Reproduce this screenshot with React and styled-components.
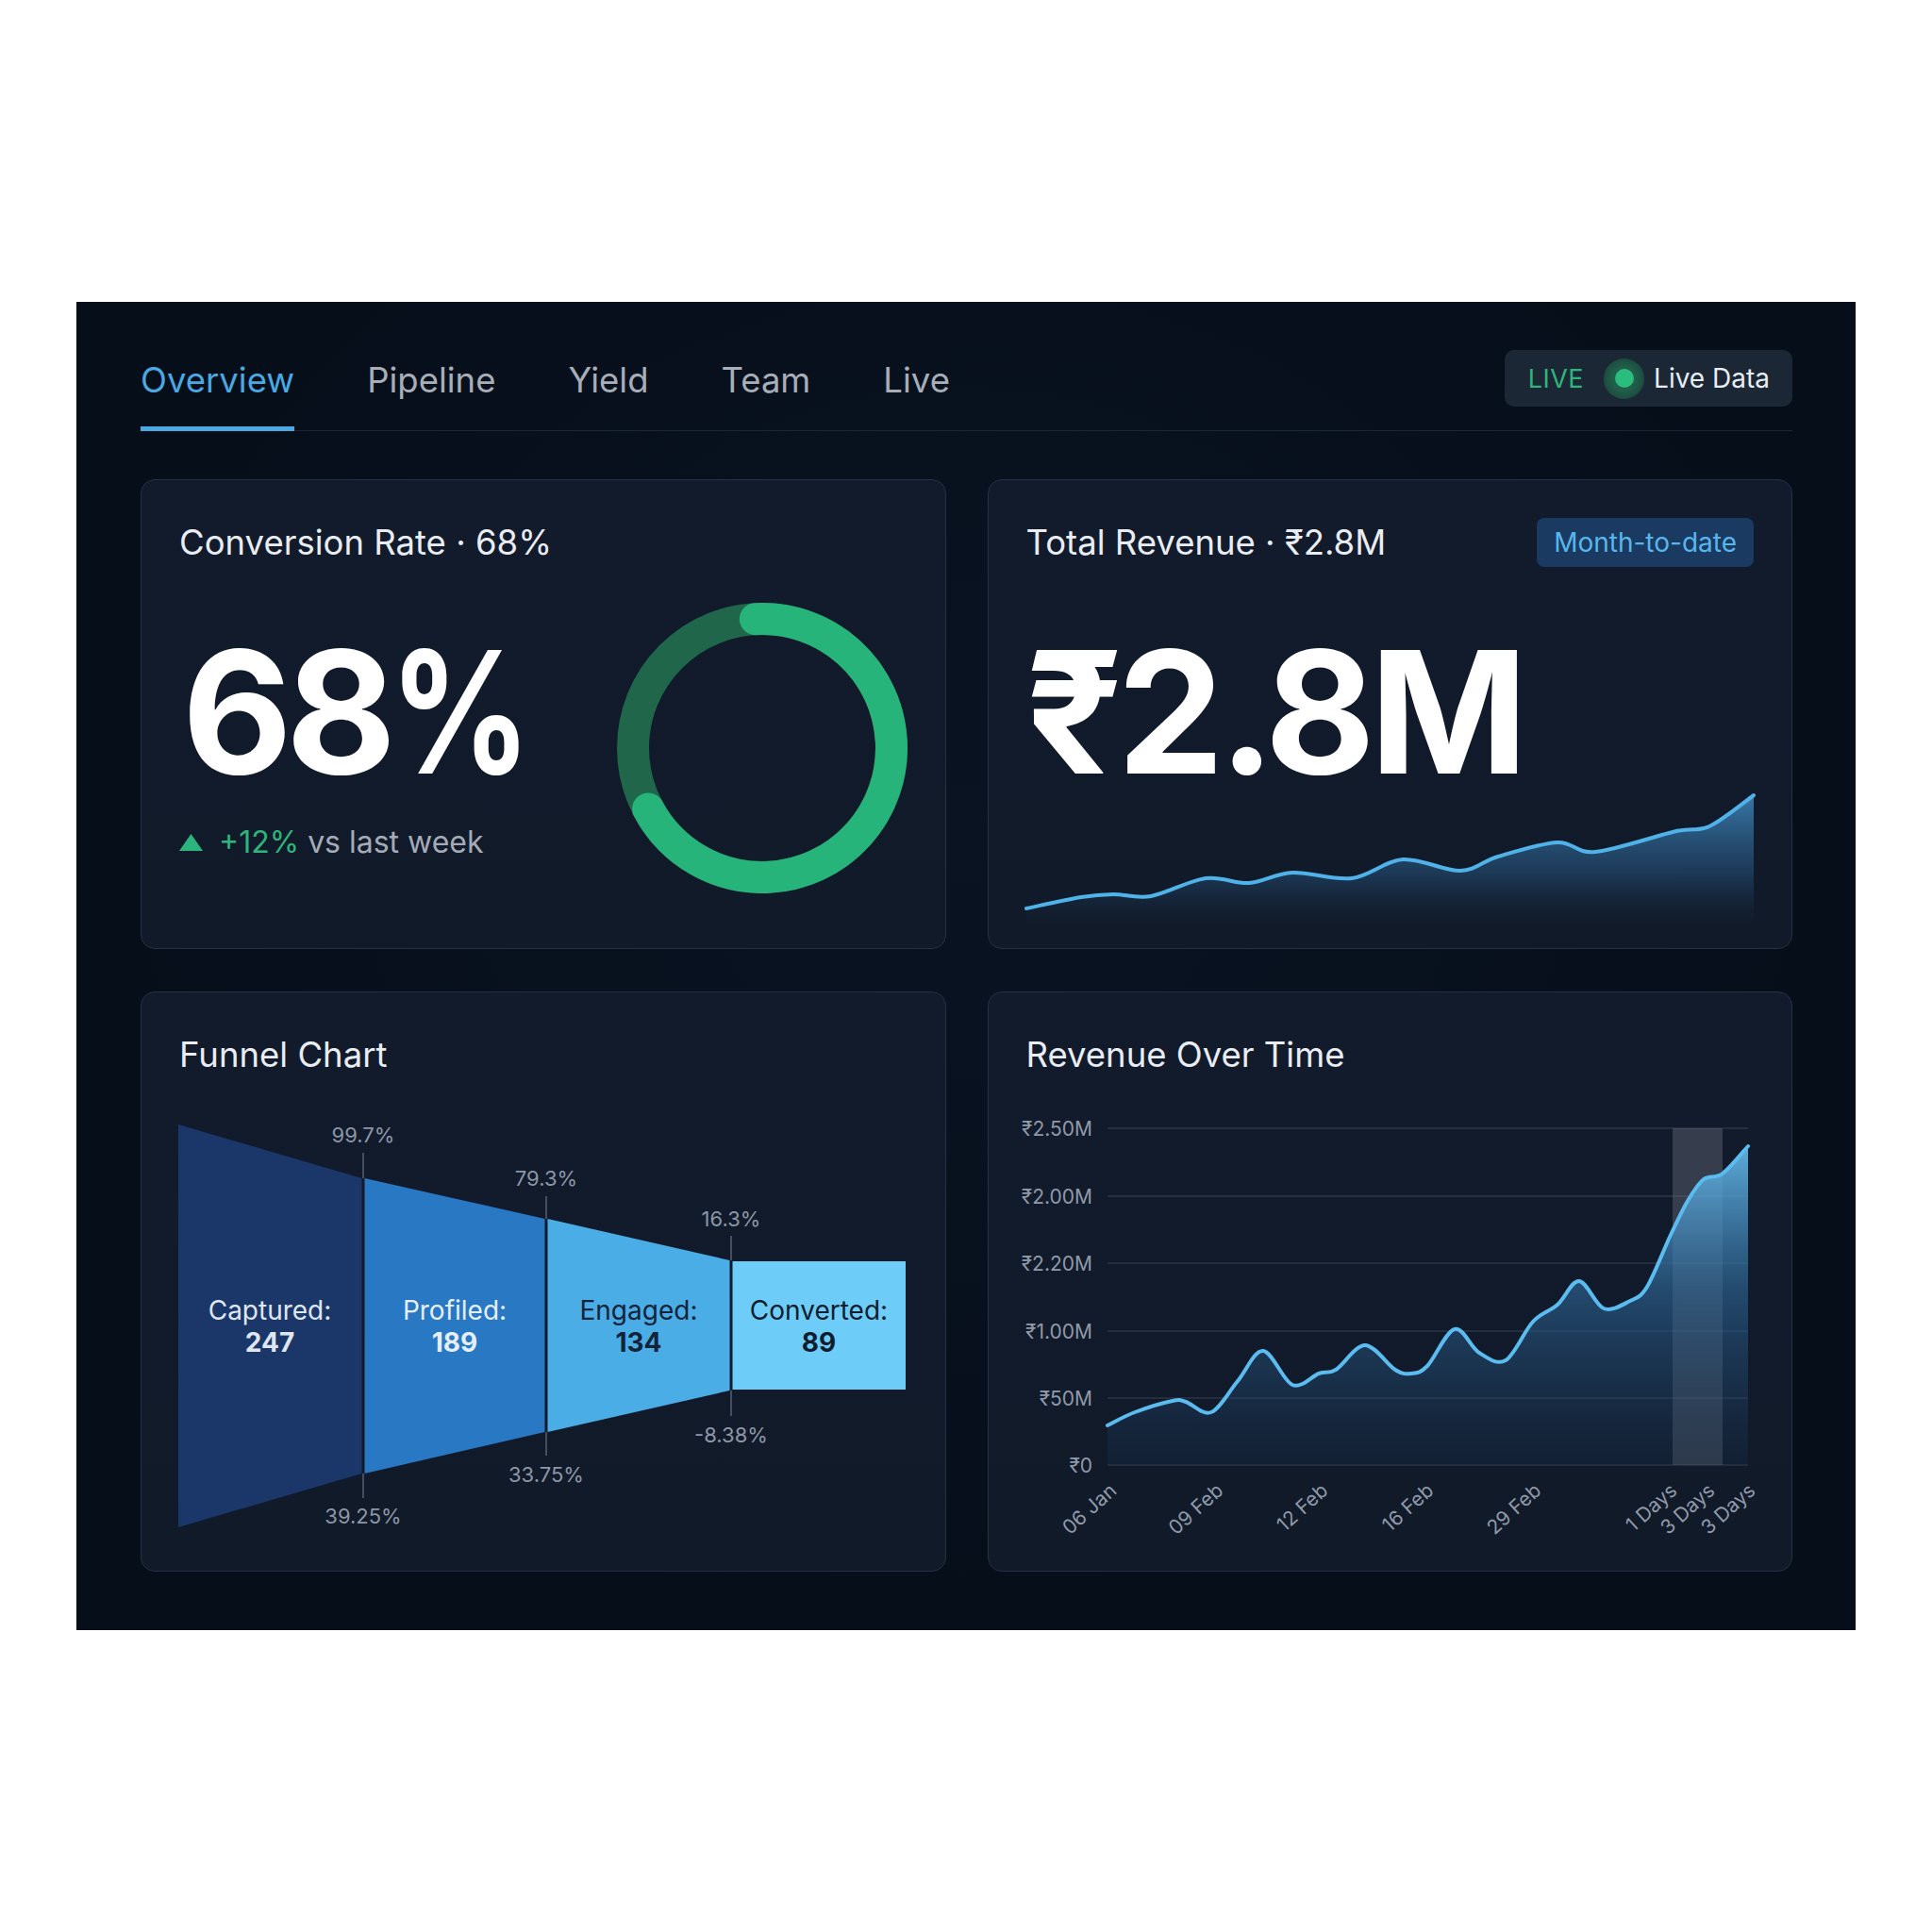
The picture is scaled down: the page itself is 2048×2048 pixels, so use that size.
import React from "react";
import styled, { createGlobalStyle } from "styled-components";

const GlobalStyle = createGlobalStyle`
  html, body {
    margin: 0;
    padding: 0;
    background: #ffffff;
  }
  body {
    font-family: "Inter", "Noto Sans", "DejaVu Sans", sans-serif;
  }
`;

const Page = styled.div`
  width: 2048px;
  height: 2048px;
  padding: 320px 0 0 81px;
  box-sizing: border-box;
`;

const Panel = styled.div`
  width: 1886px;
  height: 1408px;
  box-sizing: border-box;
  padding: 0 67px 0 68px;
  background: radial-gradient(ellipse at 50% 40%, #0a1322 0%, #060e1a 70%);
`;

const TabBar = styled.div`
  height: 137px;
  box-sizing: border-box;
  display: flex;
  align-items: flex-end;
  gap: 77px;
  border-bottom: 1px solid #1c2736;
`;

const Tab = styled.div`
  font-size: 36.5px;
  line-height: 44px;
  padding-bottom: 27px;
  margin-bottom: -1px;
  border-bottom: 5px solid ${(p) => (p.$active ? "#4aa9e2" : "transparent")};
  color: ${(p) => (p.$active ? "#4aa9e2" : "#a7aeb8")};
  cursor: pointer;
`;

const LiveBadge = styled.div`
  margin-left: auto;
  margin-bottom: 25px;
  height: 60px;
  box-sizing: border-box;
  padding: 0 24px 0 25px;
  display: flex;
  align-items: center;
  border-radius: 10px;
  background: #1c2735;
`;

const LiveText = styled.span`
  font-size: 27px;
  color: #2fb57c;
  letter-spacing: 0.5px;
`;

const LiveDot = styled.span`
  width: 43px;
  height: 43px;
  margin: 0 10px 0 21px;
  border-radius: 50%;
  background: radial-gradient(circle, #215f4b 40%, #1b4a3d 75%, rgba(28, 39, 53, 0) 100%);
  display: flex;
  align-items: center;
  justify-content: center;

  &::after {
    content: "";
    width: 20px;
    height: 20px;
    border-radius: 50%;
    background: #2bbd7e;
  }
`;

const LiveLabel = styled.span`
  font-size: 28px;
  color: #e8edf3;
`;

const Grid = styled.div`
  margin-top: 51px;
  display: grid;
  grid-template-columns: 1fr 1fr;
  grid-template-rows: 498px 615px;
  column-gap: 44px;
  row-gap: 45px;
`;

const Card = styled.div`
  box-sizing: border-box;
  border: 1px solid #253143;
  border-radius: 15px;
  background: linear-gradient(180deg, #121b2c 0%, #111a29 100%);
  padding: 40px 40px 0 40px;
  overflow: hidden;
`;

const CardHead = styled.div`
  height: 52px;
  display: flex;
  align-items: center;
  justify-content: space-between;
`;

const CardTitle = styled.div`
  font-size: 36.5px;
  line-height: 44px;
  color: #e9edf2;
`;

const RangeBadge = styled.div`
  height: 52px;
  box-sizing: border-box;
  padding: 0 18px;
  display: flex;
  align-items: center;
  border-radius: 8px;
  background: #1b3a62;
  color: #58b7ea;
  font-size: 28px;
`;

const StatBody = styled.div`
  margin-top: 38px;
  display: flex;
  justify-content: space-between;
  align-items: flex-start;
`;

const StatColumn = styled.div`
  padding-top: 41px;
  padding-left: 3px;
`;

const BigValue = styled.div`
  margin-top: ${(p) => p.$offset || 0}px;
  font-size: 180px;
  line-height: 150px;
  font-weight: 700;
  letter-spacing: ${(p) => (p.$tight ? -7 : -6)}px;
  color: #ffffff;
  white-space: nowrap;
`;

const Percent = styled.span`
  display: inline-block;
  transform: scaleX(0.82);
  transform-origin: left center;
`;

const Delta = styled.div`
  margin-top: 45px;
  margin-left: -3px;
  display: flex;
  align-items: center;
  gap: 17px;
  font-size: 32px;
  line-height: 36px;
  color: #a3abb7;
`;

const Up = styled.span`
  color: #2fb57c;
`;

const ChartSvg = styled.svg`
  display: block;
  overflow: visible;
  font-family: "Inter", "Noto Sans", "DejaVu Sans", sans-serif;
`;

// catmull-rom -> cubic bezier
const smooth = (pts) => {
  let d = `M${pts[0][0]},${pts[0][1]}`;
  for (let i = 0; i < pts.length - 1; i++) {
    const p0 = pts[i - 1] || pts[i];
    const p1 = pts[i];
    const p2 = pts[i + 1];
    const p3 = pts[i + 2] || p2;
    const c1x = p1[0] + (p2[0] - p0[0]) / 6;
    const c1y = p1[1] + (p2[1] - p0[1]) / 6;
    const c2x = p2[0] - (p3[0] - p1[0]) / 6;
    const c2y = p2[1] - (p3[1] - p1[1]) / 6;
    d += ` C${c1x.toFixed(1)},${c1y.toFixed(1)} ${c2x.toFixed(1)},${c2y.toFixed(1)} ${p2[0]},${p2[1]}`;
  }
  return d;
};

const tabs = ["Overview", "Pipeline", "Yield", "Team", "Live"];

function Ring() {
  const r = 137;
  const c = 2 * Math.PI * r;
  return (
    <svg width="308" height="308" viewBox="0 0 308 308">
      <circle cx="154" cy="154" r={r} fill="none" stroke="#1f664b" strokeWidth="34" />
      <circle
        cx="154"
        cy="154"
        r={r}
        fill="none"
        stroke="#27b47b"
        strokeWidth="34"
        strokeLinecap="round"
        strokeDasharray={`${c * 0.68} ${c}`}
        transform="rotate(-93 154 154)"
      />
    </svg>
  );
}

const sparkPts = [
  [0, 133], [58, 121], [92, 118], [132, 120], [190, 101], [236, 106], [282, 95],
  [345, 101], [399, 81], [460, 93], [500, 78], [563, 63], [603, 73], [689, 51],
  [724, 46], [771, 13],
];

function Sparkline() {
  const line = smooth(sparkPts);
  return (
    <ChartSvg width="771" height="160" viewBox="0 0 771 160">
      <defs>
        <linearGradient id="sparkFill" x1="0" y1="0" x2="0" y2="1">
          <stop offset="0%" stopColor="#428fc8" stopOpacity="0.8" />
          <stop offset="60%" stopColor="#2a5f8e" stopOpacity="0.45" />
          <stop offset="100%" stopColor="#1a3a5c" stopOpacity="0" />
        </linearGradient>
      </defs>
      <path d={`${line} L771,150 L0,150 Z`} fill="url(#sparkFill)" />
      <path d={line} fill="none" stroke="#4fb3ea" strokeWidth="4" strokeLinecap="round" />
    </ChartSvg>
  );
}

const segs = [
  { x0: 189, x1: 383.5, t0: 1192, t1: 1249, b0: 1619, b1: 1562, fill: "#1b376a", text: "#dfe6ef", name: "Captured:", value: "247", cx: 286 },
  { x0: 386.5, x1: 577.5, t0: 1249, t1: 1292, b0: 1562, b1: 1518, fill: "#2878c3", text: "#e6eef8", name: "Profiled:", value: "189", cx: 482 },
  { x0: 580.5, x1: 773.5, t0: 1292, t1: 1336, b0: 1518, b1: 1474, fill: "#4badE5", text: "#12233a", name: "Engaged:", value: "134", cx: 677 },
  { x0: 776.5, x1: 960, t0: 1337, t1: 1337, b0: 1473, b1: 1473, fill: "#6dcdf8", text: "#0f1d2e", name: "Converted:", value: "89", cx: 868 },
];

const funnelMarks = [
  { x: 385, label: "99.7%", ly: 1211, y1: 1222, y2: 1249 },
  { x: 579, label: "79.3%", ly: 1257, y1: 1268, y2: 1292 },
  { x: 775, label: "16.3%", ly: 1300, y1: 1310, y2: 1336 },
  { x: 775, label: "-8.38%", ly: 1529, y1: 1474, y2: 1501 },
  { x: 579, label: "33.75%", ly: 1571, y1: 1518, y2: 1543 },
  { x: 385, label: "39.25%", ly: 1615, y1: 1562, y2: 1588 },
];

function Funnel() {
  return (
    <ChartSvg width="771" height="520" viewBox="190 1144 771 520">
      {segs.map((s) => (
        <g key={s.name}>
          <polygon
            points={`${s.x0},${s.t0} ${s.x1},${s.t1} ${s.x1},${s.b1} ${s.x0},${s.b0}`}
            fill={s.fill}
          />
          <text x={s.cx} y="1399" textAnchor="middle" fontSize="28" fill={s.text}>
            {s.name}
          </text>
          <text x={s.cx} y="1433" textAnchor="middle" fontSize="28" fontWeight="700" fill={s.text}>
            {s.value}
          </text>
        </g>
      ))}
      {funnelMarks.map((m) => (
        <g key={m.label}>
          <line x1={m.x} x2={m.x} y1={m.y1} y2={m.y2} stroke="#566173" strokeWidth="1.5" />
          <text x={m.x} y={m.ly} textAnchor="middle" fontSize="22" fill="#8c96a6">
            {m.label}
          </text>
        </g>
      ))}
    </ChartSvg>
  );
}

const revPts = [
  [1173, 1511], [1202, 1497], [1242, 1485], [1256, 1486], [1283, 1497], [1311, 1464],
  [1338, 1432], [1369, 1468], [1397, 1456], [1415, 1452], [1446, 1426], [1478, 1452],
  [1495, 1456], [1512, 1448], [1541, 1409], [1567, 1434], [1595, 1442], [1624, 1401],
  [1650, 1383], [1673, 1358], [1699, 1387], [1727, 1379], [1745, 1364], [1770, 1309],
  [1788, 1273], [1805, 1250], [1825, 1244], [1852, 1215],
];

const yTicks = [
  { y: 1196, label: "₹2.50M" },
  { y: 1268, label: "₹2.00M" },
  { y: 1339, label: "₹2.20M" },
  { y: 1411, label: "₹1.00M" },
  { y: 1482, label: "₹50M" },
  { y: 1553, label: "₹0" },
];

const xTicks = [
  { x: 1184, label: "06 Jan" },
  { x: 1297, label: "09 Feb" },
  { x: 1408, label: "12 Feb" },
  { x: 1520, label: "16 Feb" },
  { x: 1634, label: "29 Feb" },
  { x: 1778, label: "1 Days" },
  { x: 1818, label: "3 Days" },
  { x: 1861, label: "3 Days" },
];

function RevenueChart() {
  const line = smooth(revPts);
  return (
    <ChartSvg width="771" height="520" viewBox="1087 1144 771 520">
      <defs>
        <linearGradient id="revFill" x1="0" y1="1215" x2="0" y2="1553" gradientUnits="userSpaceOnUse">
          <stop offset="0%" stopColor="#66bdef" stopOpacity="0.9" />
          <stop offset="45%" stopColor="#2f6a9c" stopOpacity="0.6" />
          <stop offset="100%" stopColor="#173150" stopOpacity="0.25" />
        </linearGradient>
      </defs>
      {yTicks.map((t) => (
        <g key={t.label}>
          <line x1="1173" x2="1852" y1={t.y} y2={t.y} stroke="#2a3546" strokeWidth="1.5" />
          <text x="1157" y={t.y + 8} textAnchor="end" fontSize="21" fill="#8f99a8">
            {t.label}
          </text>
        </g>
      ))}
      <rect x="1772" y="1196" width="53" height="357" fill="#8a8f99" fillOpacity="0.3" />
      <path d={`${line} L1852,1553 L1173,1553 Z`} fill="url(#revFill)" />
      <path d={line} fill="none" stroke="#5bbcf0" strokeWidth="4" strokeLinecap="round" />
      {xTicks.map((t, i) => (
        <text
          key={i}
          x={t.x}
          y="1582"
          textAnchor="end"
          fontSize="21"
          fill="#8f99a8"
          transform={`rotate(-42 ${t.x} 1582)`}
        >
          {t.label}
        </text>
      ))}
    </ChartSvg>
  );
}

export default function App() {
  return (
    <>
      <GlobalStyle />
      <Page>
        <Panel>
          <TabBar>
            {tabs.map((t, i) => (
              <Tab key={t} $active={i === 0}>
                {t}
              </Tab>
            ))}
            <LiveBadge>
              <LiveText>LIVE</LiveText>
              <LiveDot />
              <LiveLabel>Live Data</LiveLabel>
            </LiveBadge>
          </TabBar>

          <Grid>
            <Card>
              <CardHead>
                <CardTitle>Conversion Rate · 68%</CardTitle>
              </CardHead>
              <StatBody>
                <StatColumn>
                  <BigValue $tight>
                    68<Percent>%</Percent>
                  </BigValue>
                  <Delta>
                    <svg width="25" height="18" viewBox="0 0 25 18">
                      <polygon points="12.5,0 25,18 0,18" fill="#2bb57c" />
                    </svg>
                    <span>
                      <Up>+12%</Up> vs last week
                    </span>
                  </Delta>
                </StatColumn>
                <Ring />
              </StatBody>
            </Card>

            <Card>
              <CardHead>
                <CardTitle>Total Revenue · ₹2.8M</CardTitle>
                <RangeBadge>Month-to-date</RangeBadge>
              </CardHead>
              <BigValue $offset={79}>₹2.8M</BigValue>
              <Sparkline />
            </Card>

            <Card>
              <CardHead>
                <CardTitle>Funnel Chart</CardTitle>
              </CardHead>
              <Funnel />
            </Card>

            <Card>
              <CardHead>
                <CardTitle>Revenue Over Time</CardTitle>
              </CardHead>
              <RevenueChart />
            </Card>
          </Grid>
        </Panel>
      </Page>
    </>
  );
}
